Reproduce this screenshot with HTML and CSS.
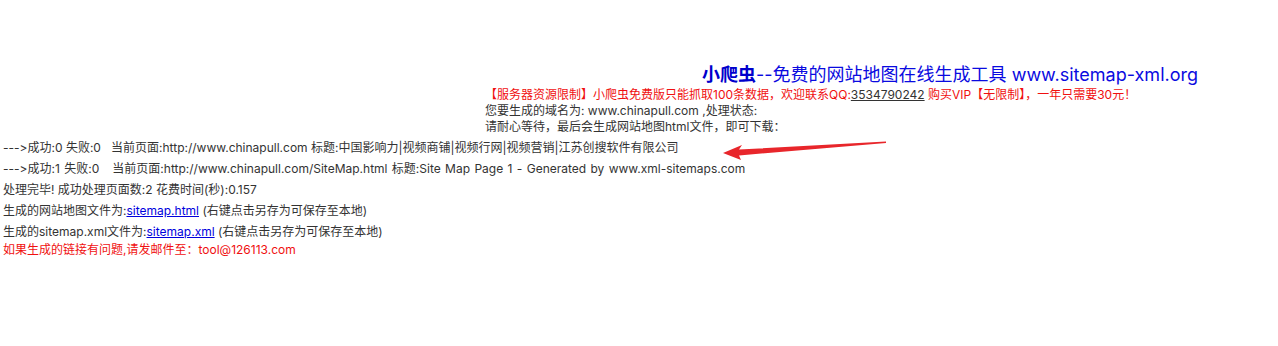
FILE: index.html
```html
<!DOCTYPE html>
<html lang="zh-CN">
<head>
<meta charset="utf-8">
<title>小爬虫 - 网站地图生成</title>
<link rel="stylesheet" href="styles.css">
</head>
<body>
<div class="head">
  <div class="title"><b>小爬虫</b>--免费的网站地图在线生成工具 www.sitemap-xml.org</div>
  <div class="notice">【服务器资源限制】小爬虫免费版只能抓取100条数据，欢迎联系QQ:<a href="#">3534790242</a> 购买VIP【无限制】，一年只需要30元！</div>
  <div class="info">您要生成的域名为: www.chinapull.com ,处理状态:</div>
  <div class="info">请耐心等待，最后会生成网站地图html文件，即可下载：</div>
</div>
<div class="log">
  <div class="row">---&gt;成功:0 失败:0 &nbsp; 当前页面:http://www.chinapull.com 标题:中国影响力|视频商铺|视频行网|视频营销|江苏创搜软件有限公司</div>
  <div class="row">---&gt;成功:1 失败:0 &nbsp; 当前页面:http://www.chinapull.com/SiteMap.html 标题:Site Map Page 1 - Generated by www.xml-sitemaps.com</div>
  <div class="row">处理完毕! 成功处理页面数:2 花费时间(秒):0.157</div>
  <div class="row">生成的网站地图文件为:<a href="#">sitemap.html</a> (右键点击另存为可保存至本地)</div>
  <div class="row">生成的sitemap.xml文件为:<a href="#">sitemap.xml</a> (右键点击另存为可保存至本地)</div>
  <div class="err">如果生成的链接有问题,请发邮件至：tool@126113.com</div>
</div>
<svg class="arrow" width="1278" height="346" viewBox="0 0 1278 346">
  <polygon points="723,153 742,145 739,149.5 886,141.5 886,143 739,155.5 741,160" fill="#e8262b"/>
</svg>
</body>
</html>
```
FILE: styles.css
```css
html, body {
  margin: 0;
  padding: 0;
  background: #fff;
}
body {
  font-family: Inter, "Noto Sans CJK SC", sans-serif;
  font-size: 12px;
  font-variant-ligatures: none;
  font-feature-settings: "calt" 0, "liga" 0;
  color: #333;
  position: relative;
  width: 1278px;
  height: 346px;
  overflow: hidden;
}
a {
  color: #0000dd;
}
.head {
  margin-left: 485px;
  width: 713px;
  padding-top: 63px;
}
.title {
  text-align: right;
  font-size: 18px;
  line-height: 24px;
  color: #0a0ae0;
}
.title b {
  color: #0000cc;
}
.notice {
  color: #f01010;
  line-height: 16px;
}
.notice a {
  color: #333;
}
.info {
  line-height: 16px;
  color: #333;
}
.log {
  padding-left: 3px;
  padding-top: 2px;
}
.row {
  line-height: 21px;
}
.row:nth-child(2) {
  word-spacing: 1px;
}
.err {
  color: #f01010;
  line-height: 15px;
}
.arrow {
  position: absolute;
  left: 0;
  top: 0;
  pointer-events: none;
}
```
